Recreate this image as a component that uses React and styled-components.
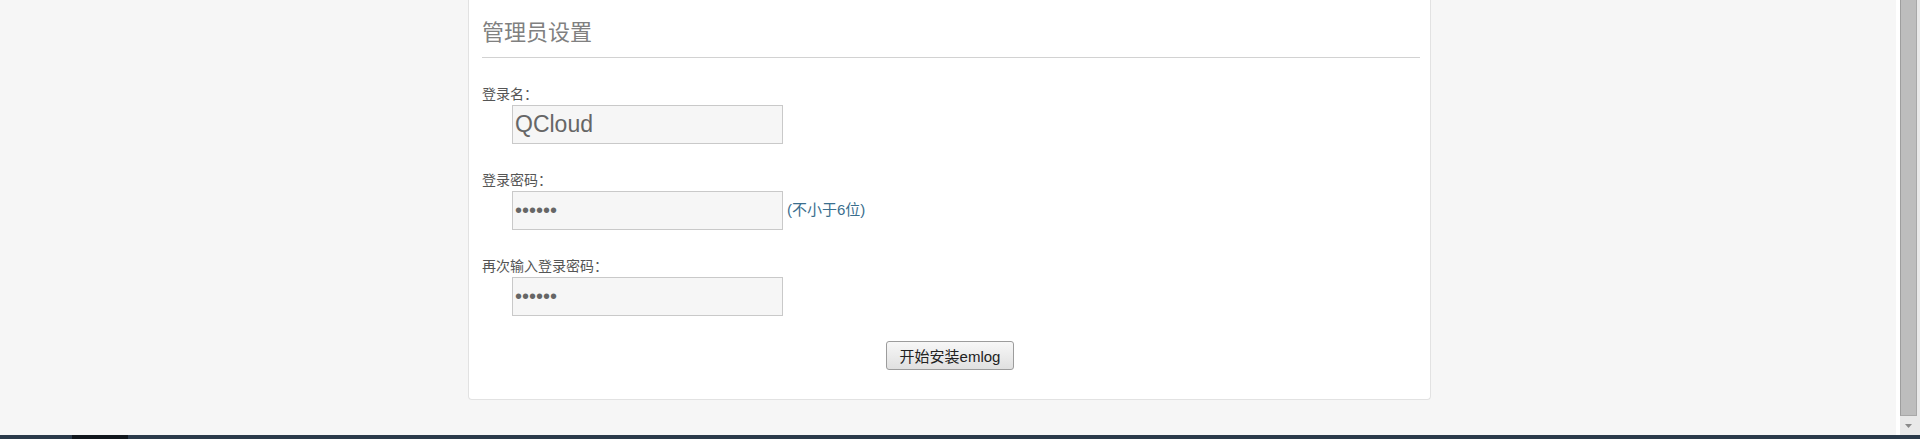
import React from "react";
import styled, { createGlobalStyle } from "styled-components";

const Global = createGlobalStyle`
  html, body { margin: 0; padding: 0; overflow: hidden; background: #f6f6f6; }
  body { font-family: "Liberation Sans", Arial, "Noto Sans CJK SC", sans-serif; }
  * { box-sizing: border-box; }
`;

const Screen = styled.div`
  width: 1920px;
  height: 439px;
  display: flex;
  flex-direction: column;
`;

const Viewport = styled.div`
  flex: 1;
  display: flex;
  min-height: 0;
`;

const Page = styled.main`
  flex: 1;
  background: #f6f6f6;
  display: flex;
  justify-content: center;
  align-items: flex-start;
  padding-left: 3px;
`;

const Card = styled.section`
  width: 963px;
  height: 400px;
  background: #fff;
  border: 1px solid #e2e2e2;
  border-top: none;
  border-radius: 0 0 4px 4px;
  padding: 18px 10px 0 13px;
  display: flex;
  flex-direction: column;
`;

const Title = styled.h2`
  margin: 0;
  font-weight: normal;
  font-size: 22px;
  line-height: 30px;
  color: #808080;
  padding-bottom: 9px;
  border-bottom: 1px solid #d2d2d2;
`;

const Field = styled.div`
  margin-top: 26px;
  display: flex;
  flex-direction: column;
`;

const Label = styled.label`
  font-size: 14px;
  line-height: 20px;
  color: #555;
`;

const InputRow = styled.div`
  display: flex;
  align-items: center;
  gap: 4px;
  margin-top: 1px;
  padding-left: 30px;
`;

const TextInput = styled.input`
  width: 271px;
  height: 39px;
  border: 1px solid #c9c9c9;
  background: #f6f6f6;
  padding: 0 2px;
  margin: 0;
  font-family: "Liberation Sans", Arial, sans-serif;
  font-size: ${(p) => (p.type === "password" ? "20px" : "23px")};
  color: #666;
  outline: none;
  border-radius: 0;
`;

const Hint = styled.span`
  font-size: 15px;
  line-height: 20px;
  color: #3a6e8e;
  margin-top: -2px;
`;

const Actions = styled.div`
  margin-top: 25px;
  display: flex;
  justify-content: center;
`;

const Button = styled.button`
  width: 128px;
  height: 29px;
  border: 1px solid #9c9c9c;
  border-radius: 3px;
  background: linear-gradient(#f7f7f7, #e0e0e0);
  font-family: "Liberation Sans", Arial, "Noto Sans CJK SC", sans-serif;
  font-size: 15px;
  color: #222;
  padding: 0;
  margin-right: 2px;
  cursor: pointer;
`;

const ScrollTrack = styled.div`
  width: 24px;
  background: linear-gradient(to right, #ffffff 0 4px, #e9e9e9 4px);
  display: flex;
  flex-direction: column;
  align-items: flex-start;
  padding-left: 4px;
`;

const Thumb = styled.div`
  width: 17px;
  height: 416px;
  background: #bdbdbd;
  border-left: 1px solid #9e9e9e;
  border-right: 1px solid #a8a8a8;
  border-bottom: 1px solid #a8a8a8;
`;

const Arrow = styled.div`
  width: 17px;
  display: flex;
  justify-content: center;
  margin-top: 8px;
`;

const Taskbar = styled.div`
  height: 4px;
  background: linear-gradient(to right, #2a3a4a 0 72px, #10161c 72px 128px, #2a3a4a 128px);
`;

export default function App() {
  return (
    <>
      <Global />
      <Screen>
        <Viewport>
          <Page>
            <Card>
              <Title>管理员设置</Title>
              <Field>
                <Label>登录名：</Label>
                <InputRow>
                  <TextInput type="text" defaultValue="QCloud" />
                </InputRow>
              </Field>
              <Field>
                <Label>登录密码：</Label>
                <InputRow>
                  <TextInput type="password" defaultValue="123456" />
                  <Hint>(不小于6位)</Hint>
                </InputRow>
              </Field>
              <Field>
                <Label>再次输入登录密码：</Label>
                <InputRow>
                  <TextInput type="password" defaultValue="123456" />
                </InputRow>
              </Field>
              <Actions>
                <Button type="button">开始安装emlog</Button>
              </Actions>
            </Card>
          </Page>
          <ScrollTrack>
            <Thumb />
            <Arrow>
              <svg width="7" height="4" viewBox="0 0 7 4">
                <path d="M0 0 L7 0 L3.5 4 Z" fill="#8a8a8a" />
              </svg>
            </Arrow>
          </ScrollTrack>
        </Viewport>
        <Taskbar />
      </Screen>
    </>
  );
}
